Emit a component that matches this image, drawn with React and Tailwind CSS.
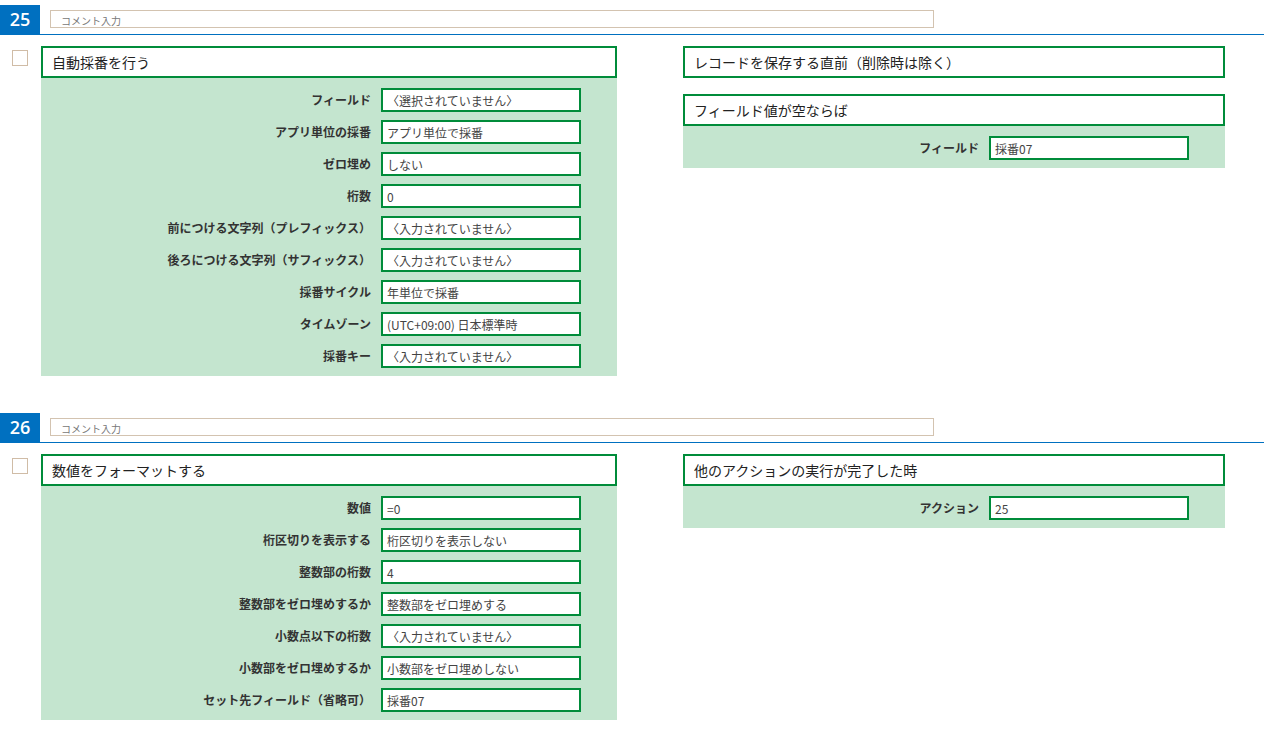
import React from "react";

const FONT = { fontFamily: '"Noto Sans CJK JP", "Noto Sans", sans-serif' };

function Row({ label, value }) {
  return (
    <div className="flex items-center justify-end gap-[10px] pr-[36px]">
      <div className="text-[12px] font-bold text-[#333] leading-none">{label}</div>
      <div className="w-[200px] h-[24px] border-2 border-[#008c3a] bg-white flex items-center pl-[4px] pt-[1px] text-[12px] text-[#444] leading-none">
        {value}
      </div>
    </div>
  );
}

function Title({ children }) {
  return (
    <div className="h-[32px] border-2 border-[#008c3a] bg-white flex items-center pl-[9px] text-[14px] text-[#222]">
      {children}
    </div>
  );
}

function Body({ rows }) {
  return (
    <div className="bg-[#c4e5cf] pt-[10px] pb-[8px] flex flex-col gap-[8px]">
      {rows.map(([l, v], i) => (
        <Row key={i} label={l} value={v} />
      ))}
    </div>
  );
}

function Header({ num }) {
  return (
    <div className="flex items-end border-b border-[#0070c0] h-[30px]">
      <div className="w-[40px] h-[29px] bg-[#0070c0] text-white text-[18px] font-semibold flex items-center justify-center" style={{ fontFamily: '"Open Sans", "Noto Sans", sans-serif' }}>
        {num}
      </div>
      <div className="ml-[10px] mb-[6px] w-[884px] h-[18px] border border-[#d3c3b0] bg-white pl-[10px] text-[10px] text-[#777] leading-none flex items-end pb-[1px]">
        コメント入力
      </div>
    </div>
  );
}

function Section({ num, left, leftRows, right }) {
  return (
    <div>
      <Header num={num} />
      <div className="flex mt-[11px]">
        <div className="w-[41px] flex-none pl-[12px] pt-[4px]">
          <div className="w-[16px] h-[16px] border border-[#d0bca6] bg-white" />
        </div>
        <div className="w-[576px] flex-none">
          <Title>{left}</Title>
          <Body rows={leftRows} />
        </div>
        <div className="w-[542px] flex-none ml-[66px] flex flex-col gap-[16px]">{right}</div>
      </div>
    </div>
  );
}

export default function App() {
  return (
    <div className="w-[1264px] h-[733px] bg-white overflow-hidden pt-[5px]" style={FONT}>
      <Section
        num="25"
        left="自動採番を行う"
        leftRows={[
          ["フィールド", "〈選択されていません〉"],
          ["アプリ単位の採番", "アプリ単位で採番"],
          ["ゼロ埋め", "しない"],
          ["桁数", "0"],
          ["前につける文字列（プレフィックス）", "〈入力されていません〉"],
          ["後ろにつける文字列（サフィックス）", "〈入力されていません〉"],
          ["採番サイクル", "年単位で採番"],
          ["タイムゾーン", "(UTC+09:00) 日本標準時"],
          ["採番キー", "〈入力されていません〉"],
        ]}
        right={
          <>
            <Title>レコードを保存する直前（削除時は除く）</Title>
            <div>
              <Title>フィールド値が空ならば</Title>
              <Body rows={[["フィールド", "採番07"]]} />
            </div>
          </>
        }
      />
      <div className="h-[37px]" />
      <Section
        num="26"
        left="数値をフォーマットする"
        leftRows={[
          ["数値", "=0"],
          ["桁区切りを表示する", "桁区切りを表示しない"],
          ["整数部の桁数", "4"],
          ["整数部をゼロ埋めするか", "整数部をゼロ埋めする"],
          ["小数点以下の桁数", "〈入力されていません〉"],
          ["小数部をゼロ埋めするか", "小数部をゼロ埋めしない"],
          ["セット先フィールド（省略可）", "採番07"],
        ]}
        right={
          <div>
            <Title>他のアクションの実行が完了した時</Title>
            <Body rows={[["アクション", "25"]]} />
          </div>
        }
      />
    </div>
  );
}
